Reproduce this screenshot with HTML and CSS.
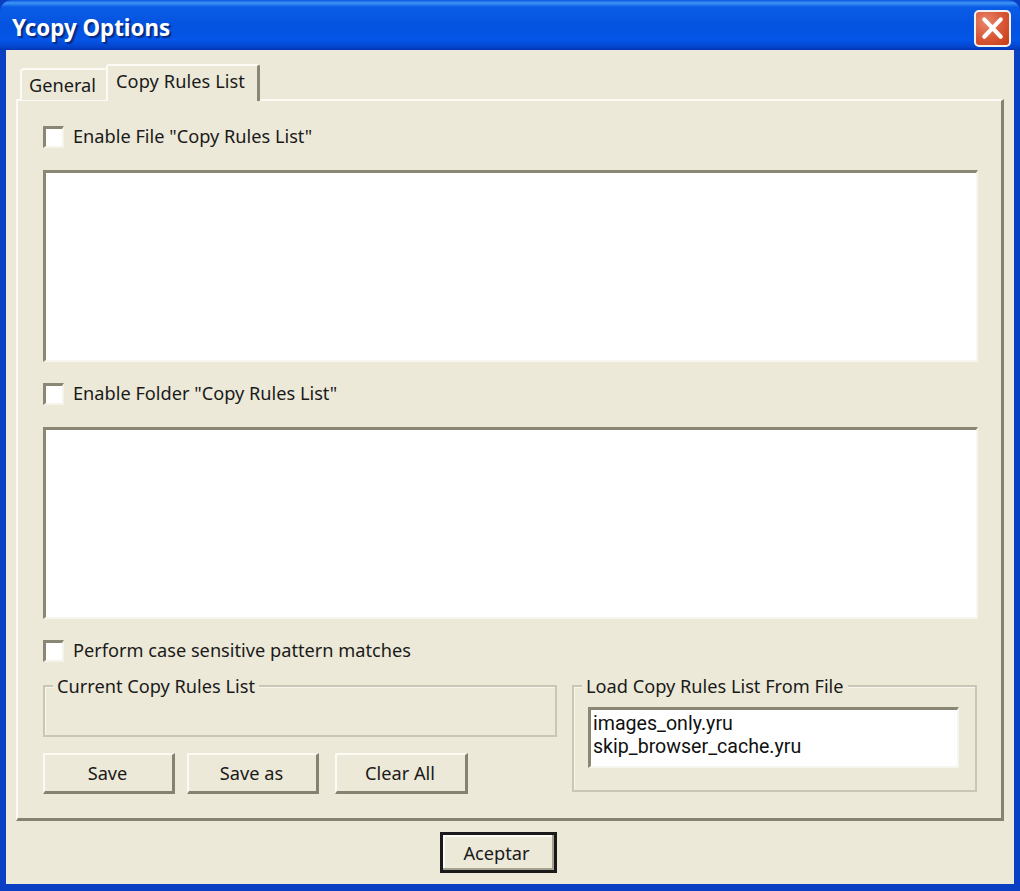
FILE: index.html
```html
<!DOCTYPE html>
<html lang="en">
<head>
<meta charset="utf-8">
<title>Ycopy Options</title>
<link rel="stylesheet" href="styles.css">
</head>
<body>
<div class="window">
  <header class="titlebar">
    <h1 class="title">Ycopy Options</h1>
    <div class="close">
      <svg viewBox="0 0 36 36" width="33" height="33" aria-hidden="true"><path d="M9 8 L27 27 M27 8 L9 27" stroke="#fff" stroke-width="4.5" stroke-linecap="round" fill="none"/></svg>
    </div>
  </header>
  <div class="client">
    <div class="tabs">
      <div class="tab">General</div>
      <div class="tab active">Copy Rules List</div>
    </div>
    <main class="panel">
      <label class="check check-first"><span class="box"></span><span class="check-text">Enable File "Copy Rules List"</span></label>
      <div class="list"></div>
      <label class="check"><span class="box"></span><span class="check-text">Enable Folder "Copy Rules List"</span></label>
      <div class="list"></div>
      <label class="check check-last"><span class="box"></span><span class="check-text">Perform case sensitive pattern matches</span></label>
      <div class="lower">
        <div class="lower-left">
          <div class="group group-current"><span class="legend">Current Copy Rules List</span></div>
          <div class="buttons">
            <div class="btn">Save</div>
            <div class="btn">Save as</div>
            <div class="btn btn-clear">Clear All</div>
          </div>
        </div>
        <div class="group group-load">
          <span class="legend">Load Copy Rules List From File</span>
          <div class="files">
            <div>images_only.yru</div>
            <div>skip_browser_cache.yru</div>
          </div>
        </div>
      </div>
    </main>
    <footer class="footer"><div class="btn btn-default">Aceptar</div></footer>
  </div>
</div>
</body>
</html>
```
FILE: styles.css
```css
* { box-sizing: border-box; }
html, body { margin: 0; padding: 0; background: #0a3fc4; }
body { width: 1020px; height: 891px; overflow: hidden; font-family: "Noto Sans", "DejaVu Sans", sans-serif; color: #1a1a1a; }
.window { width: 1020px; height: 891px; display: flex; flex-direction: column; border-radius: 12px 12px 0 0; overflow: hidden; background: #0a3fc4; }
.titlebar {
  height: 50px; flex: none; display: flex; align-items: center; justify-content: space-between;
  padding: 6px 9px 0 12px;
  background: linear-gradient(180deg, #0a55e0 0%, #3d95f5 6%, #0a5ce6 14%, #0453e0 50%, #0455e8 80%, #0347d0 92%, #0236b4 100%);
}
.title { margin: 0; font: bold 22.3px/1 "Noto Sans", "DejaVu Sans", sans-serif; color: #fff; text-shadow: 2px 2px 1px #0a2a80; }
.close {
  width: 37px; height: 37px; border: 2px solid #f1f1ef; border-radius: 5px;
  background: radial-gradient(circle at 30% 30%, #e8866a 0%, #d9593a 50%, #c73a12 100%);
  display: flex; align-items: center; justify-content: center;
}
.close svg { display: block; }
.client { flex: 1; margin: 0 6px 7px; background: #ece9d8; padding: 0 10px; display: flex; flex-direction: column; }
.tabs { height: 50px; display: flex; align-items: flex-end; padding-left: 4px; position: relative; z-index: 1; margin-bottom: -1px; }
.tab {
  width: 86px; height: 32px; font-size: 18.2px; line-height: 28px; text-align: center; padding: 1px 3px 0 0;
  background: #ece9d8; border-top: 2px solid #fbfaf4; border-left: 2px solid #fbfaf4; border-radius: 4px 0 0 0;
}
.tab.active {
  width: 154px; height: 37px; line-height: 31px; padding: 0 4px 0 0; letter-spacing: .08px;
  border-right: 3px solid #8a8775; border-radius: 3px 3px 0 0;
  box-shadow: inset 0 -2px 0 #ece9d8;
  margin-bottom: -1px;
}
.panel {
  width: 988px; height: 722px; flex: none; padding: 24px 23px 0 25px;
  border-top: 2px solid #fbfaf4; border-left: 2px solid #fbfaf4;
  border-right: 3px solid #85826f; border-bottom: 3px solid #85826f;
  display: flex; flex-direction: column;
}
.check { height: 24px; display: flex; align-items: center; gap: 9px; font-size: 18.2px; line-height: 22px; margin-top: 20px; margin-bottom: 21px; }
.check-text { padding-bottom: 2px; }
.check-first { margin-top: 0; }
.check-last { margin-bottom: 22px; }
.box { width: 21px; height: 22px; flex: none; background: #fff; border-top: 3px solid #8a8775; border-left: 3px solid #8a8775; border-right: 2px solid #f5f3ea; border-bottom: 2px solid #f5f3ea; }
.list { height: 192px; flex: none; background: #fff; border-top: 3px solid #8a8775; border-left: 3px solid #8a8775; border-right: 2px solid #f7f6ee; border-bottom: 2px solid #f7f6ee; }
.lower { display: flex; gap: 15px; }
.lower-left { width: 514px; flex: none; }
.group { position: relative; border: 2px solid #c9c6b4; box-shadow: inset 1px 1px 0 #f7f6ee; }
.group-current { height: 52px; }
.group-load { width: 405px; height: 107px; padding: 20px 16px 0 14px; }
.legend { position: absolute; top: -12px; left: 8px; padding: 0 4px; background: #ece9d8; font-size: 18.2px; line-height: 23px; }
.buttons { display: flex; margin-top: 16px; gap: 12px; }
.btn {
  width: 132px; height: 41px; display: flex; align-items: center; justify-content: center; font-size: 18.2px; padding-right: 2px;
  background: #ece9d8; border-top: 2px solid #fbfaf4; border-left: 2px solid #fbfaf4;
  border-right: 3px solid #85826f; border-bottom: 3px solid #85826f;
}
.btn-clear { margin-left: 4px; width: 133px; }
.files {
  height: 61px; background: #fff; padding: 2px 2px 0; font-family: Roboto, "Noto Sans", sans-serif; font-size: 19.6px; line-height: 23px; color: #111;
  border-top: 3px solid #8a8775; border-left: 3px solid #8a8775; border-right: 2px solid #f7f6ee; border-bottom: 2px solid #f7f6ee;
}
.footer { flex: 1; display: flex; justify-content: center; padding: 11px 24px 0 0; }
.btn-default { width: 117px; height: 41px; padding-right: 3px; border: 3px solid #1a1a1a; box-shadow: inset -2px -2px 0 #a5a290, inset 2px 2px 0 #fbfaf4; }
```
